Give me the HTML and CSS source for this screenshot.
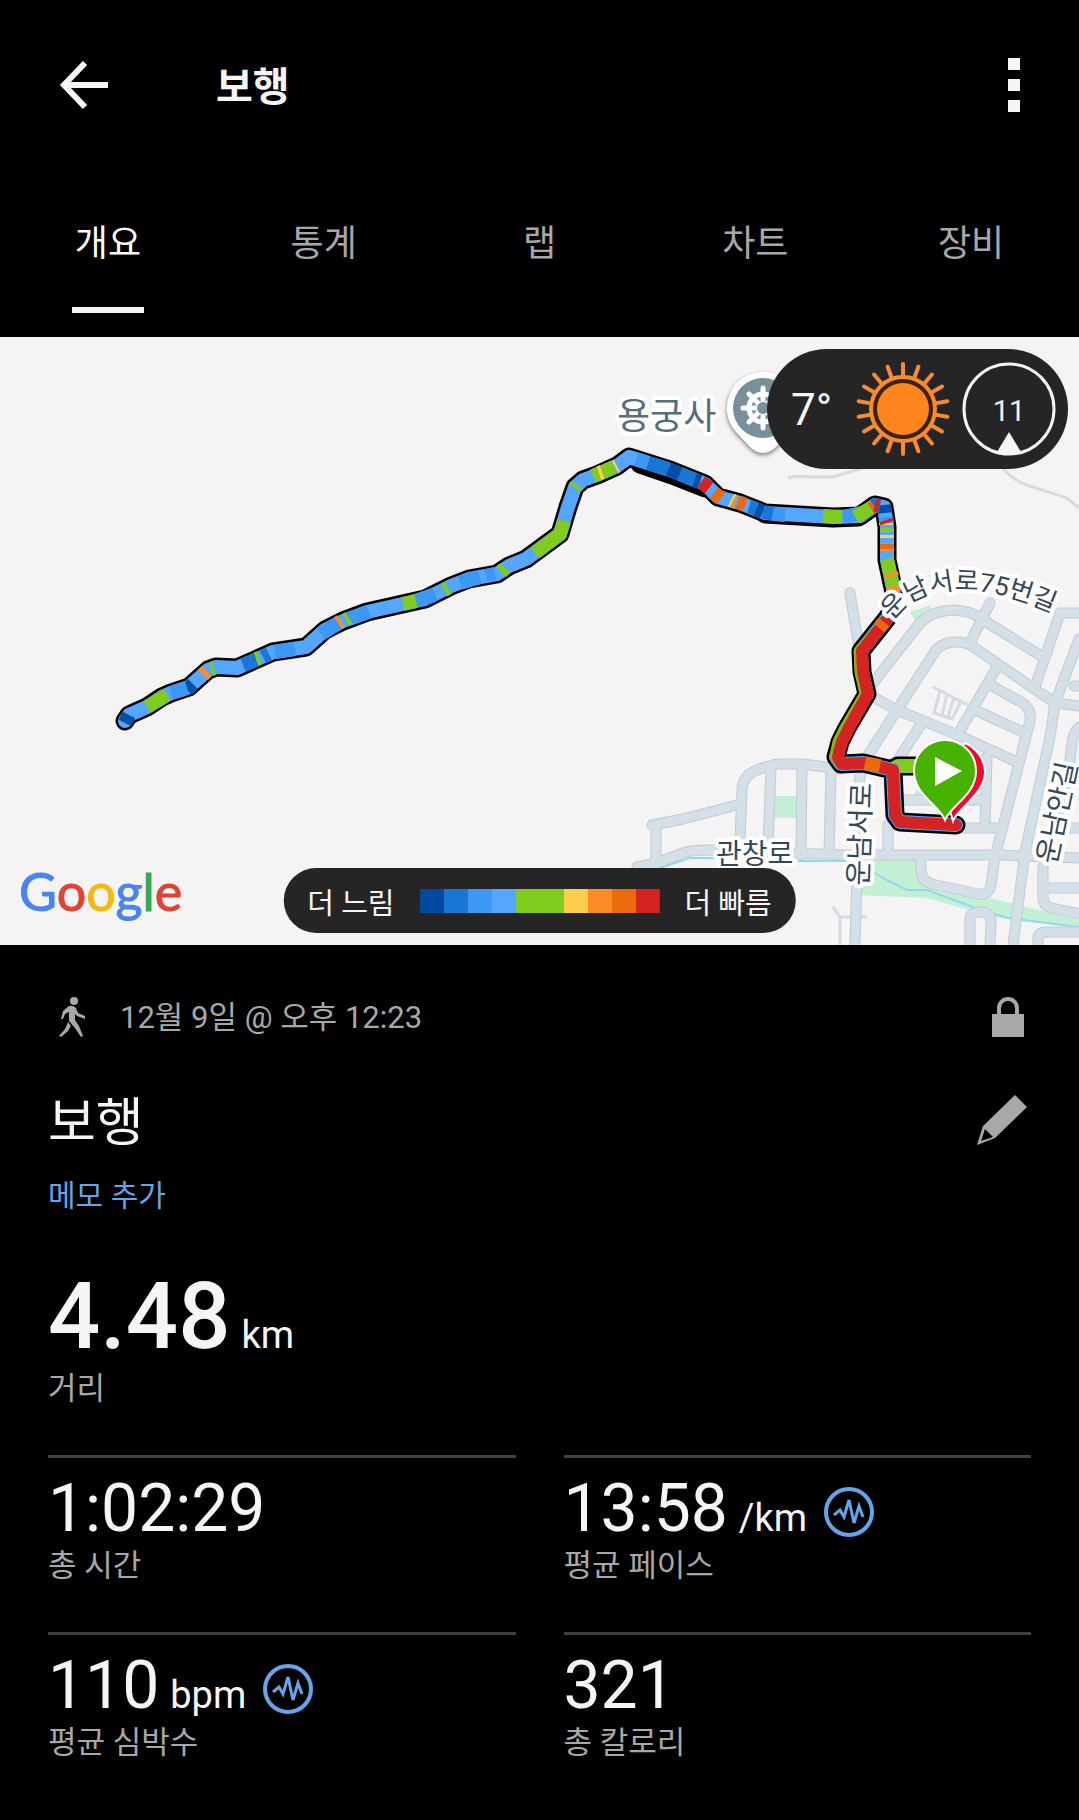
FILE: index.html
```
<!DOCTYPE html>
<html lang="ko">
  <head>
    <meta charset="UTF-8" />
    <meta name="viewport" content="width=device-width, initial-scale=1" />
    <title>보행</title>
    <link rel="stylesheet" href="styles.css">
  </head>
  <body>
    <header class="topbar">
      <button class="icon-btn" type="button" aria-label="뒤로">
        <svg width="50" height="50" viewBox="0 0 50 50">
          <path d="M26 3 L5 25 L26 47 M5 25 H49" fill="none" stroke="#f5f5f5" stroke-width="6" />
        </svg>
      </button>
      <h1 class="topbar-title">보행</h1>
      <button class="icon-btn" type="button" aria-label="메뉴">
        <svg width="12" height="54" viewBox="0 0 12 54" fill="#f5f5f5">
          <rect width="12" height="12" />
          <rect y="21" width="12" height="12" />
          <rect y="42" width="12" height="12" />
        </svg>
      </button>
    </header>

    <nav class="tabs">
      <a class="tab active" href="#overview">개요</a>
      <a class="tab" href="#stats">통계</a>
      <a class="tab" href="#laps">랩</a>
      <a class="tab" href="#charts">차트</a>
      <a class="tab" href="#gear">장비</a>
    </nav>

    <section class="map" id="overview">
      <svg class="map-canvas" viewBox="0 0 1079 608">
        <defs>
          <g id="roads">
            <path d="M850 256 L858 305 L864 360 M860 432 L855 608" />
            <path d="M873 346 L920 286 Q932 274 953 273 Q973 274 983 283 L1043 320 M990 266 L970 306" />
            <path d="M1079 276 H1060 L1035 350" />
            <path d="M867 420 L897 373 L936 313 Q943 305 957 305 Q966 305 972 309 L1055 366 L1079 369" />
            <path d="M1079 302 L1055 366 L1050 400 L1025 515 L1013 608" />
            <path d="M873 360 L897 373 L960 399 L1017 425 M997 330 L958 397" />
            <path d="M990 348 L1021 365 Q1032 371 1030 384 L1025 403 L995 520 L991 548 Q989 559 978 557 L932 547 Q921 544 921 532 L920 520" />
            <path d="M975 373 L1023 395 M922 386 L898 423 M1074 349 H1079" />
            <path d="M740 503 L742 452 Q743 439 755 434 Q771 427 780 427 L803 427 L840 432" />
            <path d="M771 430 L768 510 M802 430 L801 518 M831 433 L829 516" />
            <path d="M652 488 L683 482 L737 468 M656 488 V526 M637 530 L657 526 L683 516 Q692 513 707 513 L847 518 H1000 L1079 521" />
            <path d="M888 488 V518 M900 463 H985 M950 491 H1000 M987 420 L985 490" />
            <path d="M1079 390 Q1073 396 1072 406 L1068 440 L1043 530 V560 Q1043 569 1052 571 L1079 577 M1045 551 H1079 M1066 491 H1079" />
            <path d="M970 608 V582 Q970 575 980 575 Q991 575 991 584 L990 608 M1038 608 V602 Q1038 595 1046 595 H1079" />
          </g>
          <path id="curve" d="M893 284 C918 244 984 242 1066 282" />
          <path id="route" d="M125 384 L129 378 L147 370 L162 360 L171 356 L189 350 L208 333 L216 330 L237 331 L273 315 L306 310 L325 293 L343 284 L367 275 L425 262 L451 249 L469 242 L497 237 L509 229 L526 222 L560 197 L568 170 L575 150 L583 143 L597 138 L617 129 L629 120 L670 133 L705 147 L718 160 L740 166 L765 176 L833 180 L860 179 L875 168 L884 170 L887 190 L887 223 L893 251 L895 265 L888 280 L861 314 L862 335 L867 357 L847 391 L840 405 L836 420 L841 427 L863 426 L893 433 L895 478 L900 485 L956 488" />
        </defs>

        <rect class="land" width="1079" height="608" />
        <g class="park">
          <rect x="773" y="459" width="26" height="22" />
          <path d="M875 521 H918 L922 543 L990 561 L1043 574 L1079 583 V591 L993 580 L927 561 L858 558 Z" />
          <path d="M910 275 L931 268 V278 L917 286 Z M915 454 h12 v10 h-12 z" />
        </g>
        <g class="water">
          <path d="M660 531 L690 521 H717 M798 524 H852" />
          <path d="M873 535 L887 543 L907 553 L927 553 L973 570 L1007 581 L1047 586 L1079 590" />
        </g>
        <g class="lane">
          <path d="M788 141 Q797 138 808 140 L833 140 L863 131 M1000 128 Q1012 143 1027 148 L1067 161 L1079 171" />
          <path d="M933 350 L968 368 M940 354 L934 376 L952 382 L961 364 M947 357 L942 379 M954 360 L948 380" />
          <path d="M833 570 L840 580 V608 M840 580 H867" />
        </g>
        <use href="#roads" class="road-edge" />
        <use href="#roads" class="road" />

        <!-- route, coloured by pace -->
        <path class="route-edge" d="M893 432 L898 429 H925" />
        <use href="#route" class="route-edge" />
        <path class="route-edge" d="M640 127 L672 138 L705 151 M765 177 L833 181 L858 180 L873 170" />
        <path class="route-line" stroke="#80cc1e" d="M893 432 L898 429 H925" />
        <use href="#route" class="route-line" stroke="#55a6ff" />
        <g class="pace" stroke="#0050a5">
          <path d="M125 386 L129 378 M187 353 L193 347 M668 132 L680 137 M756 172 L763 175" />
          <path d="M694 143 L700 145 M884 168 L885 176" />
        </g>
        <g class="pace" stroke="#1976d5">
          <path d="M243 328 L257 322 M263 320 L269 317 M425 262 L432 259 M648 126 L668 132 M680 137 L694 143 M749 170 L756 172 M763 175 L773 177 M866 175 L875 168 L880 169" />
        </g>
        <g class="pace" stroke="#3d97f5">
          <path d="M171 356 L187 351 M275 315 L295 312 M321 297 L340 285 M349 282 L369 275 M415 264 L435 257 M460 246 L480 240 M486 239 L495 237 M636 122 L648 126 M773 177 L785 178 M843 180 L866 175 M886 180 L887 187" />
        </g>
        <g class="pace" stroke="#80cc1e">
          <path d="M147 370 L167 358 M211 332 L214 331 M256 322 L259 321 M346 283 L349 281 M403 267 L416 264 M444 253 L448 251 M501 235 L505 231 M535 216 L560 197 L564 184 M593 139 L614 130 M823 179 L842 180 M855 180 L871 171 M887 191 L887 195 M887 222 L893 249 M575 151 L577 148" />
        </g>
        <g class="pace" stroke="#f98d26">
          <path d="M203 338 L207 334 M338 286 L341 284 M733 164 L736 165 M887 206 L887 214 M891 236 L892 240 M893 249 L894 255" />
        </g>
        <g class="pace" stroke="#eb6a0d">
          <path d="M714 156 L721 161 M738 165 L745 168 M871 171 L874 169 M887 207 L887 212" />
        </g>
        <g class="pace" stroke="#ffcf4d">
          <path d="M599 136 L602 135 M615 130 L617 129 M886 186 L886 188 M887 198 L887 201 M731 163 L733 164" />
        </g>
        <g class="pace" stroke="#d32322">
          <path d="M701 145 L709 151 M875 168 L879 169 M886 183 L887 186" />
        </g>
        <path class="under" d="M892 272 L888 280 L859 314 L860 335 L865 357 L845 391 L838 405 L835 420 L841 427" />
        <path class="fast" d="M893 274 L888 281 L862 314 L863 335 L868 357 L849 391 L842 405 L838 420 L842 427 L863 426 L893 433 L895 478 L900 485 L956 488" />
        <path class="pace" stroke="#eb6a0d" d="M884 285 L879 291 M865 426 L880 429" />

        <g class="labels">
          <text class="place" x="617" y="92">용궁사</text>
          <text x="716" y="527">관창로</text>
          <text class="curved"><textPath href="#curve">운남서로75번길</textPath></text>
          <text transform="translate(868 549) rotate(-88)">운남서로</text>
          <text transform="translate(1056 528) rotate(-78)">운남안길</text>
        </g>

        <!-- temple pin -->
        <g class="pin-shadow">
          <path fill="#fff" d="M763 35 a36 36 0 0 1 27 60 L775 111 Q763 121 751 111 L736 95 A36 36 0 0 1 763 35 Z" />
          <circle cx="763" cy="71" r="30" fill="#78909c" />
          <g fill="none" stroke="#fff" stroke-width="5" stroke-linecap="round">
            <circle cx="763" cy="71" r="14" />
            <path d="M763 51 V91 M743 71 H783 M749 57 L777 85 M777 57 L749 85" />
          </g>
          <circle cx="763" cy="71" r="6" fill="#78909c" />
        </g>

        <!-- finish and start pins -->
        <path d="M953 484 C957 472 986 456 985 434 A33 33 0 0 0 965 406 L940 440 Z" fill="#f2092f" stroke="#fff" stroke-width="2" />
        <path d="M945 483 C939 468 914 458 914 434 A31 31 0 0 1 976 434 C976 458 951 468 945 483 Z" fill="#47b200" stroke="#fff" stroke-width="2" />
        <path d="M935 420 L962 434 L935 449 Z" fill="#fff" />
      </svg>

      <div class="weather">
        <span class="temp">7°</span>
        <svg width="94" height="94" viewBox="-47 -47 94 94" fill="none">
          <g id="sun" stroke="#f98b2b" stroke-width="4" stroke-linecap="round">
            <g id="rays">
              <path id="ray" d="M0 -34 V-45" />
              <use href="#ray" transform="rotate(20)" />
              <use href="#ray" transform="rotate(40)" />
            </g>
            <use href="#rays" transform="rotate(60)" />
            <use href="#rays" transform="rotate(120)" />
            <use href="#rays" transform="rotate(180)" />
            <use href="#rays" transform="rotate(240)" />
            <use href="#rays" transform="rotate(300)" />
          </g>
          <circle r="32" fill="#3b220b" stroke="#f98b2b" stroke-width="4" />
          <circle r="26" fill="#ff861f" />
        </svg>
        <svg class="wind" width="94" height="94" viewBox="-47 -47 94 94">
          <circle r="45" fill="none" stroke="#f5f5f5" stroke-width="3" />
          <path d="M0 23 L12 43 Q0 48 -12 43 Z" fill="#f5f5f5" />
          <text y="12" text-anchor="middle">11</text>
        </svg>
      </div>

      <div class="google"><span class="blue">G</span><span class="red">o</span><span class="yellow">o</span><span class="blue">g</span><span class="green">l</span><span class="red">e</span></div>

      <div class="legend">
        <span>더 느림</span>
        <svg width="240" height="24" viewBox="0 0 10 1" preserveAspectRatio="none" shape-rendering="crispEdges">
          <rect width="1" height="1" fill="#0049a0" />
          <rect x="1" width="1" height="1" fill="#1976d5" />
          <rect x="2" width="1" height="1" fill="#3d97f5" />
          <rect x="3" width="1" height="1" fill="#55a6ff" />
          <rect x="4" width="2" height="1" fill="#80cc1e" />
          <rect x="6" width="1" height="1" fill="#fdce4d" />
          <rect x="7" width="1" height="1" fill="#fb8c27" />
          <rect x="8" width="1" height="1" fill="#eb6a0d" />
          <rect x="9" width="1" height="1" fill="#d32322" />
        </svg>
        <span>더 빠름</span>
      </div>
    </section>

    <main class="details">
      <div class="meta">
        <svg width="26" height="40" viewBox="0 0 26 40" fill="#a8a8a8">
          <circle cx="15" cy="4" r="4" />
          <path d="M10 9 Q14 8 17 11 L19 16 L26 19 V22 L18 19 L16 17 L16 23 L20 29 L24 39 L22 40 L16 31 L10 24 L10 15 L6 17 L4 22 L2 22 L4 14 Z" />
          <path d="M9 25 L12 29 L9 34 L2 40 L0 39 L6 32 Z" />
        </svg>
        <span class="date">12월 9일 @ 오후 12:23</span>
        <svg class="lock" width="32" height="40" viewBox="0 0 32 40">
          <path d="M7 18 V11 a9 9 0 0 1 18 0 V18" fill="none" stroke="#a8a8a8" stroke-width="4" />
          <rect y="17" width="32" height="23" fill="#a8a8a8" />
        </svg>
      </div>

      <div class="name-row">
        <h2>보행</h2>
        <button class="icon-btn" type="button" aria-label="이름 편집">
          <svg width="50" height="50" viewBox="0 0 50 50" fill="#a8a8a8">
            <path fill-rule="evenodd" d="M38 0 L50 12 L18 43 L0 50 L6 31 Z M8 34 L4 46 L16 42 Z" />
          </svg>
        </button>
      </div>
      <a class="memo" href="#memo">메모 추가</a>

      <div class="distance">
        <div class="big">4.48<span class="unit">km</span></div>
        <div class="label">거리</div>
      </div>

      <div class="stats">
        <div class="stat">
          <div class="value">1:02:29</div>
          <div class="label">총 시간</div>
        </div>
        <div class="stat">
          <div class="value">
            <span>13:58<span class="unit">/km</span></span>
            <svg class="pulse" width="50" height="50" viewBox="0 0 50 50">
              <circle cx="25" cy="25" r="23" />
              <path d="M10 28 L16 23 L20 30 L25 13 L30 36 L35 19 L39 30" />
            </svg>
          </div>
          <div class="label">평균 페이스</div>
        </div>
        <div class="stat">
          <div class="value">
            <span>110<span class="unit">bpm</span></span>
            <svg class="pulse" width="50" height="50" viewBox="0 0 50 50">
              <circle cx="25" cy="25" r="23" />
              <path d="M10 28 L16 23 L20 30 L25 13 L30 36 L35 19 L39 30" />
            </svg>
          </div>
          <div class="label">평균 심박수</div>
        </div>
        <div class="stat">
          <div class="value">321</div>
          <div class="label">총 칼로리</div>
        </div>
      </div>
    </main>
  </body>
</html>
```
FILE: styles.css
```
* {
  box-sizing: border-box;
}
body {
  margin: 0;
  background: #000;
  color: #f5f5f5;
  font-family: Roboto, "Noto Sans CJK KR", sans-serif;
}
h1,
h2 {
  margin: 0;
}
svg {
  display: block;
  flex-shrink: 0;
}
.icon-btn {
  padding: 0;
  border: none;
  background: none;
  cursor: pointer;
}

/* header */
.topbar {
  display: flex;
  align-items: center;
  height: 170px;
  padding: 0 59px;
}
.topbar-title {
  flex: 1;
  margin-left: 107px;
  padding-top: 6px;
  font-size: 40px;
  line-height: 48px;
}
.tabs {
  display: grid;
  grid-template-columns: repeat(5, 1fr);
  justify-items: center;
  padding: 50px 0 24px;
}
.tab {
  min-width: 72px;
  padding-bottom: 39px;
  border-bottom: 6px solid transparent;
  color: #a8a8a8;
  font-size: 36px;
  line-height: 48px;
  text-align: center;
  text-decoration: none;
}
.tab.active {
  color: #fff;
  border-color: #f5f5f5;
}

/* map */
.map {
  position: relative;
}
.map-canvas {
  width: 100%;
  height: auto;
}
.land {
  fill: #f5f3f4;
}
.park {
  fill: #c3f0d5;
}
.water {
  fill: none;
  stroke: #90daee;
  stroke-width: 2;
}
.lane {
  fill: none;
  stroke: #d2dce4;
  stroke-width: 3;
}
.road-edge {
  fill: none;
  stroke: #bfcbd4;
  stroke-width: 11;
  stroke-linecap: round;
  stroke-linejoin: round;
}
.road {
  fill: none;
  stroke: #d5dfe7;
  stroke-width: 9;
  stroke-linecap: round;
  stroke-linejoin: round;
}
.route-edge {
  fill: none;
  stroke: #000;
  stroke-width: 19;
  stroke-linecap: round;
  stroke-linejoin: round;
}
.route-line {
  fill: none;
  stroke-width: 14;
  stroke-linecap: round;
  stroke-linejoin: round;
}
.pace {
  fill: none;
  stroke-width: 14;
}
.under {
  fill: none;
  stroke: #8fae1c;
  stroke-width: 11;
  stroke-linejoin: round;
}
.fast {
  fill: none;
  stroke: #d32322;
  stroke-width: 12;
  stroke-linecap: round;
  stroke-linejoin: round;
}
.labels {
  fill: #33475b;
  stroke: #fff;
  stroke-width: 8;
  stroke-linejoin: round;
  paint-order: stroke;
  font-size: 28px;
}
.place {
  fill: #546e7a;
  font-size: 36px;
}
.curved {
  font-size: 26px;
}
.pin-shadow {
  filter: drop-shadow(0 2px 2px rgba(0, 0, 0, 0.5));
}
.weather {
  position: absolute;
  top: 12px;
  right: 11px;
  display: flex;
  align-items: center;
  height: 120px;
  padding: 0 12px 0 24px;
  border-radius: 60px;
  background: #252525;
}
.temp {
  width: 65px;
  padding-top: 2px;
  font-size: 44px;
}
.wind {
  margin-left: 12px;
  fill: #f5f5f5;
  font-size: 29px;
}
.google {
  position: absolute;
  left: 19px;
  bottom: 22px;
  font-family: Lato, sans-serif;
  font-size: 52px;
  line-height: 64px;
  -webkit-text-stroke: 1px;
}
.blue {
  color: #4885ed;
}
.red {
  color: #db4437;
}
.yellow {
  color: #f4b912;
}
.green {
  color: #34a853;
}
.legend {
  position: absolute;
  left: 50%;
  bottom: 12px;
  display: flex;
  align-items: center;
  gap: 25px;
  height: 65px;
  padding: 0 24px;
  border-radius: 33px;
  background: #252525;
  font-size: 29px;
  white-space: nowrap;
  transform: translateX(-50%);
}

/* activity details */
.details {
  padding: 52px 48px 0;
}
.meta {
  display: flex;
  align-items: center;
  height: 40px;
  padding: 0 7px 0 11px;
  color: #a8a8a8;
}
.date {
  margin-left: 35px;
  padding-top: 2px;
  font-size: 31px;
  line-height: 40px;
}
.lock {
  margin-left: auto;
}
.name-row {
  display: flex;
  align-items: center;
  justify-content: space-between;
  margin-top: 49px;
  padding-right: 4px;
}
.name-row h2 {
  padding-top: 8px;
  font-size: 52px;
  font-weight: 400;
  line-height: 60px;
}
.memo {
  display: block;
  margin-top: 22px;
  color: #62a5ea;
  font-size: 30px;
  line-height: 40px;
  text-decoration: none;
}
.distance {
  margin: 47px 0 48px;
}
.big {
  font-size: 92px;
  font-weight: 500;
  line-height: 108px;
}
.unit {
  margin-left: 11px;
  font-size: 38px;
  font-weight: 400;
  line-height: 1;
}
.label {
  color: #a8a8a8;
  font-size: 31px;
  line-height: 36px;
}
.stats {
  display: grid;
  grid-template-columns: 1fr 1fr;
  column-gap: 48px;
}
.stat {
  padding: 12px 0 48px;
  border-top: 3px solid #404040;
}
.value {
  display: flex;
  align-items: center;
  gap: 17px;
  font-size: 66px;
  line-height: 78px;
}
.pulse {
  margin-top: 6px;
  fill: none;
  stroke: #62a5ea;
  stroke-width: 4;
}
.pulse path {
  stroke-width: 3;
}
```
